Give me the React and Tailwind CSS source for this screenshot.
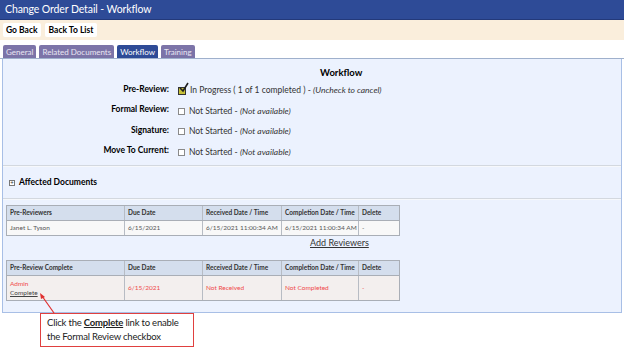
import React from "react";

const font = { fontFamily: "Lato, 'Liberation Sans', sans-serif" };

const steps = [
  { label: "Pre-Review:", checked: true, status: "In Progress ( 1 of 1 completed ) - ", note: "(Uncheck to cancel)" },
  { label: "Formal Review:", checked: false, status: "Not Started - ", note: "(Not available)" },
  { label: "Signature:", checked: false, status: "Not Started - ", note: "(Not available)" },
  { label: "Move To Current:", checked: false, status: "Not Started - ", note: "(Not available)" },
];

const cols = "grid-cols-[118px_78px_79px_77px_40px]";

function Divider() {
  return <div className="h-[2px] border-t border-[#d3d8df] bg-[#f6f8fb]" />;
}

function Checkbox({ checked }) {
  if (!checked) {
    return <span className="inline-block h-[7px] w-[7px] shrink-0 border border-[#8a8a8a] bg-white" />;
  }
  return (
    <span className="relative inline-block h-[8px] w-[8px] shrink-0 border border-[#333] bg-[#c9c23a]">
      <svg className="absolute -right-[4px] -top-[6px]" width="10" height="11" viewBox="0 0 10 11">
        <path d="M1 6 L4 9 L9 1" fill="none" stroke="#1f1f1f" strokeWidth="1.6" />
      </svg>
    </span>
  );
}

function Cell({ children, className = "" }) {
  return (
    <div className={"flex items-center whitespace-nowrap border-r border-[#b7bcc4] px-[3px] last:border-r-0 " + className}>
      {children}
    </div>
  );
}

export default function App() {
  return (
    <div className="relative h-[348px] w-[624px] overflow-hidden bg-white" style={font}>
      <div className="flex h-[20px] items-center border-b border-[#23397a] bg-[#2e4b97] pl-[5px] text-[10.5px] tracking-[-0.1px] text-white">
        Change Order Detail - Workflow
      </div>
      <div className="flex h-[20px] items-center gap-[4px] bg-[#faeedc] pl-[3px]">
        <button className="h-[14px] rounded-[2px] bg-white px-[3px] text-[8.5px] font-bold leading-[14px] text-black">Go Back</button>
        <button className="h-[14px] rounded-[2px] bg-white px-[4px] text-[8.5px] font-bold leading-[14px] text-black">Back To List</button>
      </div>
      <div className="flex h-[19px] items-end gap-[3px] border-b border-[#9fb0cc] pl-[3px]">
        <span className="flex h-[13px] items-center rounded-t-[2px] bg-[#7c74a8] px-[3px] text-[8px] text-[#e9e6f3]">General</span>
        <span className="flex h-[13px] items-center rounded-t-[2px] bg-[#7c74a8] px-[3px] text-[8px] text-[#e9e6f3]">Related Documents</span>
        <span className="flex h-[13px] items-center rounded-t-[2px] bg-[#2e4b97] px-[3px] text-[8px] text-white">Workflow</span>
        <span className="flex h-[13px] items-center rounded-t-[2px] bg-[#7c74a8] px-[3px] text-[8px] text-[#e9e6f3]">Training</span>
      </div>

      <div className="mx-[2px] h-[254px] border-x border-b border-[#a8bfe6] bg-[#ecf2fe]">
        <div className="pt-[8px]">
          <div className="pl-[317px] text-[9.5px] font-bold leading-[12px] text-black">Workflow</div>
          <div className="flex flex-col">
            {steps.map((s) => (
              <div key={s.label} className="grid h-[20.5px] grid-cols-[166px_auto] items-center">
                <div className="text-right text-[8.5px] font-bold text-black">{s.label}</div>
                <div className="flex items-center gap-[4px] pl-[9px] pt-[3px] text-[8.5px] text-[#333]">
                  <Checkbox checked={s.checked} />
                  <span>
                    {s.status}
                    <span className="italic">{s.note}</span>
                  </span>
                </div>
              </div>
            ))}
          </div>
        </div>

        <div className="mt-[4px]">
          <Divider />
        </div>
        <div className="flex h-[31px] items-center gap-[4px] pl-[6px]">
          <span className="flex h-[6px] w-[6px] items-center justify-center border border-[#777] bg-white text-[6px] leading-none text-[#333]">+</span>
          <span className="text-[8.5px] font-bold text-black">Affected Documents</span>
        </div>
        <Divider />

        <div className="ml-[3px] mt-[5px] w-[394px] border border-[#a9aeb6] text-[6.5px]">
          <div className={"grid h-[15px] border-b border-[#a9aeb6] bg-[#d4deed] font-bold text-[#333] " + cols}>
            <Cell>Pre-Reviewers</Cell>
            <Cell>Due Date</Cell>
            <Cell>Received Date / Time</Cell>
            <Cell>Completion Date / Time</Cell>
            <Cell>Delete</Cell>
          </div>
          <div className={"grid h-[14px] bg-[#f8f8f8] text-[#555] " + cols}>
            <Cell>Janet L. Tyson</Cell>
            <Cell>6/15/2021</Cell>
            <Cell>6/15/2021 11:00:34 AM</Cell>
            <Cell>6/15/2021 11:00:34 AM</Cell>
            <Cell>-</Cell>
          </div>
        </div>
        <div className="ml-[307px] mt-[1px] text-[9px] leading-[12px] text-[#333] underline">Add Reviewers</div>

        <div className="ml-[3px] mt-[11px] w-[394px] border border-[#a9aeb6] text-[6.5px]">
          <div className={"grid h-[15px] border-b border-[#a9aeb6] bg-[#d4deed] font-bold text-[#333] " + cols}>
            <Cell>Pre-Review Complete</Cell>
            <Cell>Due Date</Cell>
            <Cell>Received Date / Time</Cell>
            <Cell>Completion Date / Time</Cell>
            <Cell>Delete</Cell>
          </div>
          <div className={"grid h-[24px] bg-[#f3efee] text-[#f04a4a] " + cols}>
            <Cell>
              <div className="flex flex-col leading-[9px]">
                <span>Admin</span>
                <span className="text-[#444] underline">Complete</span>
              </div>
            </Cell>
            <Cell>6/15/2021</Cell>
            <Cell>Not Received</Cell>
            <Cell>Not Completed</Cell>
            <Cell>-</Cell>
          </div>
        </div>
      </div>

      <svg className="absolute left-[36px] top-[292px]" width="24" height="24" viewBox="0 0 24 24">
        <path d="M18 21 L6 4" stroke="#e0302f" strokeWidth="1.2" />
        <path d="M4 1 L9 5 L5 7 Z" fill="#e0302f" />
      </svg>
      <div className="absolute left-[40px] top-[313px] h-[34px] w-[154px] whitespace-nowrap border border-[#e0403f] bg-white px-[6px] pt-[2px] text-[9.5px] leading-[14px] tracking-[-0.2px] text-[#222]">
        <div>
          Click the <span className="font-bold underline">Complete</span> link to enable
        </div>
        <div>the Formal Review checkbox</div>
      </div>
    </div>
  );
}
